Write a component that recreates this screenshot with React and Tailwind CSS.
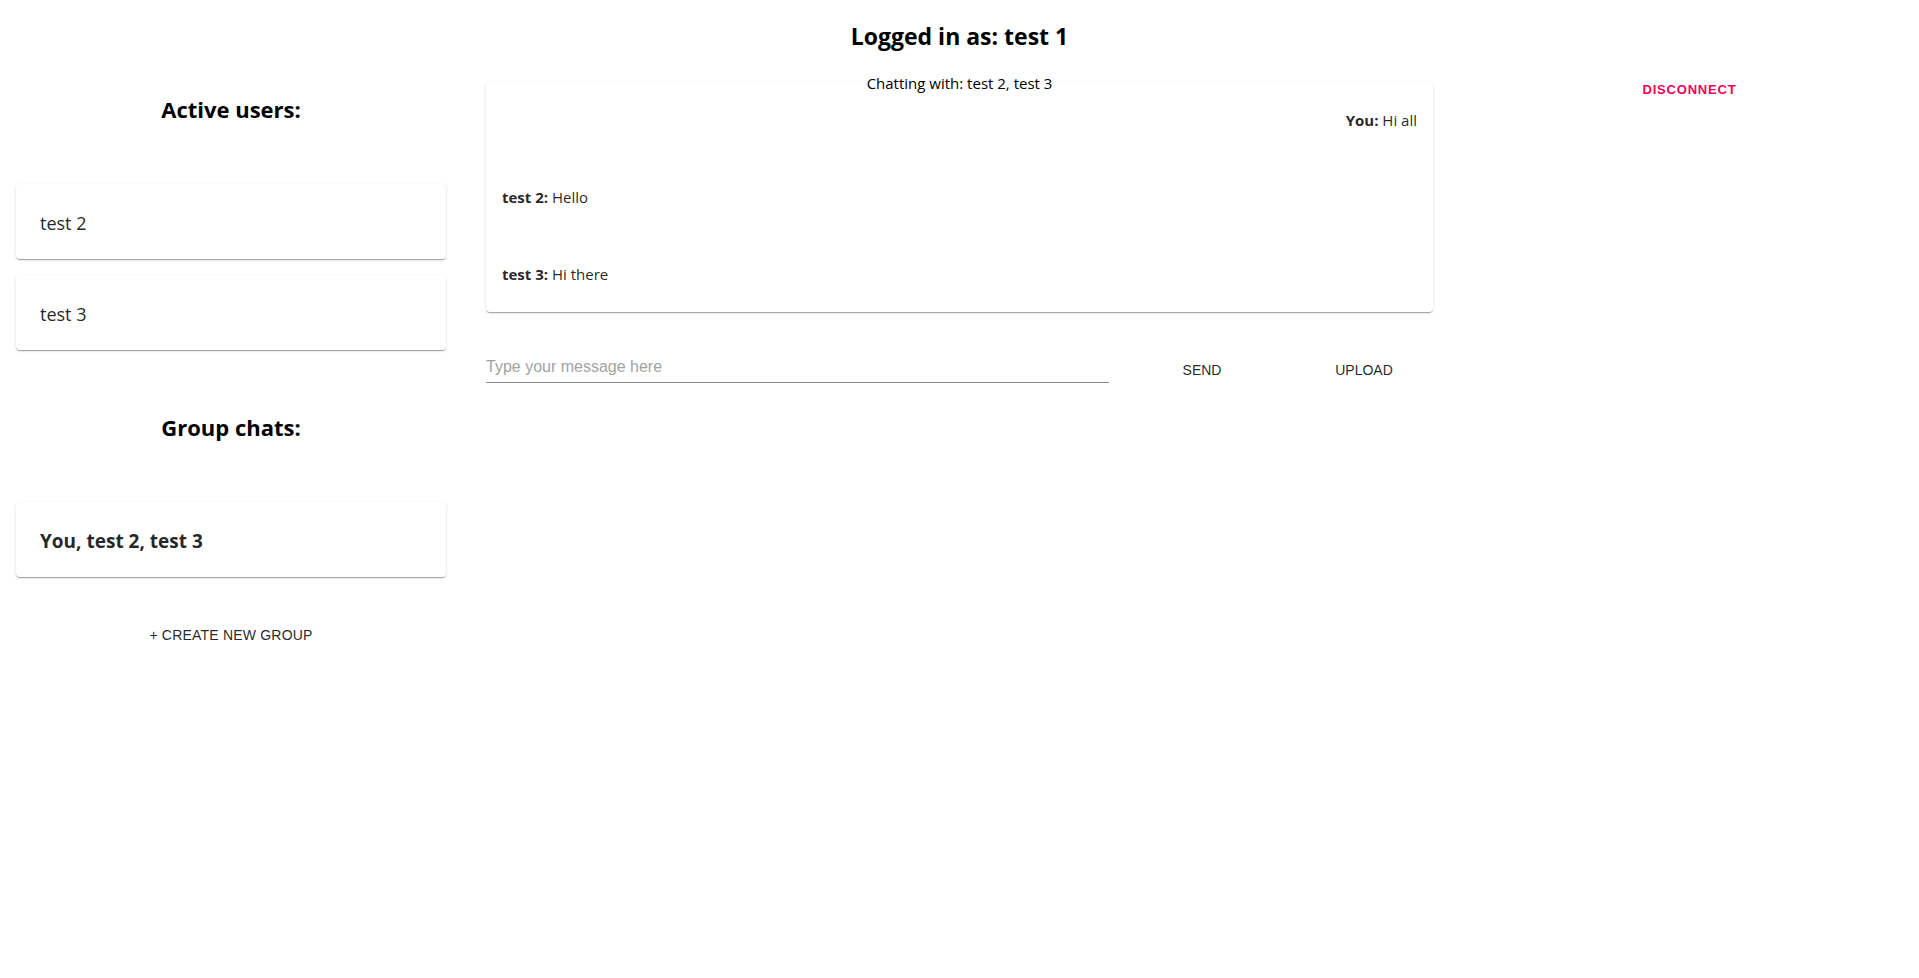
import React from "react";

const card =
  "bg-white rounded-[4px] shadow-[0px_2px_1px_-1px_rgba(0,0,0,0.2),0px_1px_1px_0px_rgba(0,0,0,0.14),0px_1px_3px_0px_rgba(0,0,0,0.12)]";

const sans = "font-['Open_Sans',sans-serif]";
const arial = "font-['Liberation_Sans',Arial,sans-serif]";

export default function App() {
  return (
    <div className={`w-[1919px] min-h-[978px] bg-white text-black ${sans}`}>
      <div className="h-[62px] flex items-center justify-center pt-[10px]">
        <h2 className="text-[23px] font-bold leading-[32px]">Logged in as: test 1</h2>
      </div>
      <div className="flex">
        {/* Left column */}
        <div className="w-[480px] pl-4 pr-[34px] flex flex-col">
          <h3 className="mt-[31px] h-[32px] leading-[32px] text-center text-[22px] font-bold">Active users:</h3>
          <div className="mt-[59px] flex flex-col gap-4">
            <div className={`${card} h-[75px] flex items-center px-6 pt-[3px] text-[18px] text-[rgba(0,0,0,0.87)]`}>test 2</div>
            <div className={`${card} h-[75px] flex items-center px-6 pt-[3px] text-[18px] text-[rgba(0,0,0,0.87)]`}>test 3</div>
          </div>
          <h3 className="mt-[61px] h-[32px] leading-[32px] text-center text-[22px] font-bold">Group chats:</h3>
          <div className="mt-[59px]">
            <div className={`${card} h-[75px] flex items-center px-6 pt-[3px] text-[19px] font-bold text-[rgba(0,0,0,0.87)]`}>You, test 2, test 3</div>
          </div>
          <div className="mt-[40px] flex justify-center">
            <button className={`h-[36px] px-2 ${arial} text-[14px] uppercase text-[rgba(0,0,0,0.87)] tracking-[0.2px]`}>
              + Create new group
            </button>
          </div>
        </div>

        {/* Center column */}
        <div className="w-[960px] pl-[6px] pr-[7px]">
          <div className={`${card} relative mt-[19px]`}>
            <div className="absolute left-0 right-0 -top-[8px] text-center text-[15px] leading-[20px] text-black">
              Chatting with: test 2, test 3
            </div>
            <div className="h-[77px] flex items-center justify-end px-4 pt-[2px] text-[15px] text-[rgba(0,0,0,0.87)]">
              <span><b>You:</b> Hi all</span>
            </div>
            <div className="h-[77px] flex items-center px-4 pt-[2px] text-[15px] text-[rgba(0,0,0,0.87)]">
              <span><b>test 2:</b> Hello</span>
            </div>
            <div className="h-[77px] flex items-center px-4 pt-[2px] text-[15px] text-[rgba(0,0,0,0.87)]">
              <span><b>test 3:</b> Hi there</span>
            </div>
          </div>
          <div className="mt-[35px] flex items-end">
            <div className="w-[623px] border-b border-[#8a8a8a] h-[32px] flex items-center">
              <input
                className={`w-full outline-none ${arial} text-[16px] placeholder:text-[#a2a2a2] text-black`}
                placeholder="Type your message here"
              />
            </div>
            <div className="w-[186px] flex justify-center translate-y-[5px]">
              <button className={`h-[36px] px-2 ${arial} text-[14px] uppercase text-[rgba(0,0,0,0.87)]`}>Send</button>
            </div>
            <div className="w-[138px] flex justify-center translate-y-[5px]">
              <button className={`h-[36px] px-2 ${arial} text-[14px] uppercase text-[rgba(0,0,0,0.87)]`}>Upload</button>
            </div>
          </div>
        </div>

        {/* Right column */}
        <div className="flex-1 flex justify-center pl-[20px]">
          <button className={`mt-[10px] h-[36px] px-2 ${arial} text-[13px] font-bold uppercase tracking-[0.8px] text-[#f50057]`}>
            Disconnect
          </button>
        </div>
      </div>
    </div>
  );
}
